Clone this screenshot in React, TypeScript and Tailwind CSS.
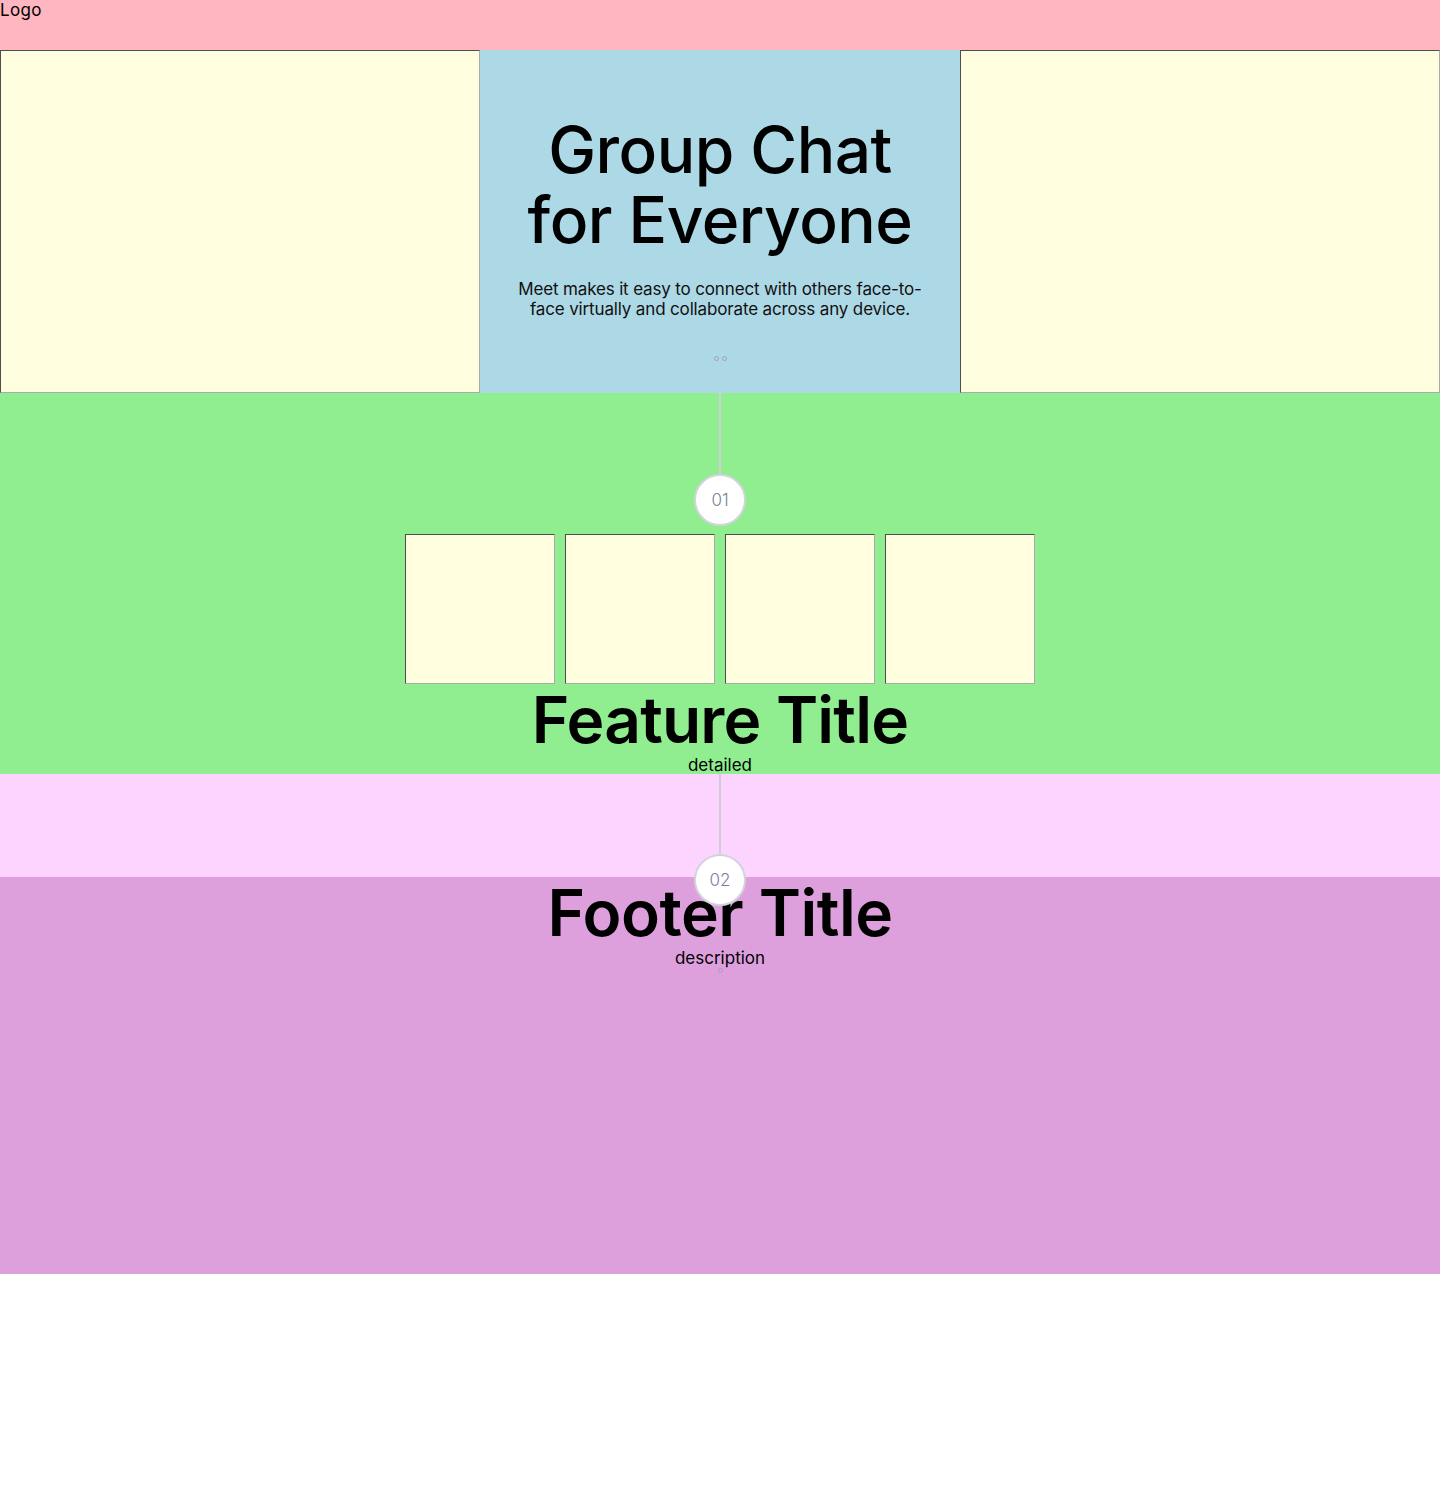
import React from "react";

function SideBox({ small }: { small?: boolean }) {
  const size = small ? "w-[150px] h-[150px]" : "";
  return (
    <div
      className={`${size} bg-[#ffffe0] border border-t-[#4d4d4d] border-l-[#4d4d4d] border-b-[#ababab] border-r-[#ababab]`}
    />
  );
}

function Step({ label }: { label: string }) {
  return (
    <div className="w-[52px] h-[52px] rounded-full bg-white border-2 border-[#d3d3dd] flex items-center justify-center pt-[2px] text-[17px] font-light text-[#7e7e96]">
      {label}
    </div>
  );
}

function Dot() {
  return <span className="block w-[5px] h-[5px] rounded-full border border-[#a3a3b0]" />;
}

export default function App() {
  return (
    <div className="w-[1440px] text-black font-[Inter,'Noto_Sans',sans-serif]">
      {/* header */}
      <header className="h-[50px] bg-[#ffb6c1]">
        <span className="block text-[17px] leading-[20px] tracking-[0.3px]">Logo</span>
      </header>

      {/* hero */}
      <section className="grid grid-cols-3 h-[343px]">
        <SideBox />
        <div className="bg-[#add8e6] flex flex-col items-center pt-[65px] text-center">
          <h1 className="text-[64px] leading-[70px] font-medium tracking-[-0.5px]">
            Group Chat
            <br />
            for Everyone
          </h1>
          <p className="mt-[24px] text-[17px] leading-[20px] text-[#111] tracking-[-0.15px]">
            Meet makes it easy to connect with others face-to-
            <br />
            face virtually and collaborate across any device.
          </p>
          <div className="mt-[37px] flex gap-[3px]">
            <Dot />
            <Dot />
          </div>
        </div>
        <SideBox />
      </section>

      {/* features */}
      <section className="bg-[#90ee90] flex flex-col items-center">
        <div className="w-[2px] h-[81px] bg-[#cfcfd8]" />
        <Step label="01" />
        <div className="mt-[8px] flex gap-[10px]">
          <SideBox small />
          <SideBox small />
          <SideBox small />
          <SideBox small />
        </div>
        <h2 className="text-[64px] leading-[72px] font-semibold tracking-[-0.8px]">Feature Title</h2>
        <p className="text-[17px] leading-[18px]">detailed</p>
      </section>

      {/* divider */}
      <section className="relative h-[103px] bg-[#fdd3ff] flex justify-center">
        <div className="w-[2px] h-[80px] bg-[#cfcfd8]" />
        <div className="absolute left-1/2 top-[80px] -translate-x-1/2 z-10">
          <Step label="02" />
        </div>
      </section>

      {/* footer */}
      <footer className="h-[397px] bg-[#dda0dd] flex flex-col items-center">
        <h2 className="text-[64px] leading-[72px] font-semibold tracking-[-0.5px]">Footer Title</h2>
        <p className="text-[17px] leading-[18px]">description</p>
        <div className="mt-[1px]">
          <Dot />
        </div>
      </footer>
    </div>
  );
}
